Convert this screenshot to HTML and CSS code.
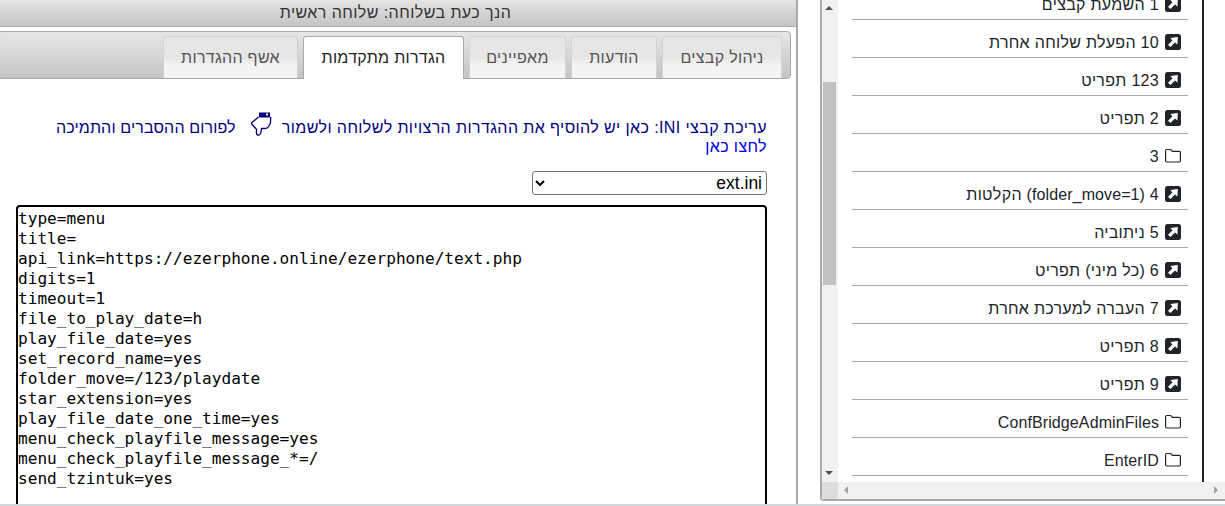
FILE: index.html
```html
<!DOCTYPE html>
<html lang="he" dir="rtl">
<head>
<meta charset="utf-8">
<title>שלוחה ראשית</title>
<link rel="stylesheet" href="styles.css">
</head>
<body>
<svg class="defs" width="0" height="0" aria-hidden="true">
  <symbol id="sc" viewBox="0 0 16 16"><path fill="currentColor" d="M2.500 0A2.500 2.500 0 0 0 0 2.500v11A2.500 2.500 0 0 0 2.500 16h11a2.500 2.500 0 0 0 2.500-2.500v-11A2.500 2.500 0 0 0 13.500 0z"/><path fill="#fff" d="M3 10.800 7.400 6.500 5.400 4.100 12.800 3 12.400 10.500 10 8.400 5.400 13.100z"/></symbol>
  <symbol id="fd" viewBox="0 0 16 16"><path fill="none" stroke="currentColor" stroke-width="1.200" d="M.6 12.800V2.700c0-.7.5-1.200 1.200-1.200h3.400c.5 0 .9.2 1.200.6l.9 1.300h6.900c.7 0 1.200.5 1.200 1.200v8.200c0 .7-.5 1.200-1.200 1.200H1.800c-.7 0-1.200-.5-1.200-1.200z"/></symbol>
</svg>
<div class="page">
  <main class="main">
    <header class="title">הנך כעת בשלוחה: שלוחה ראשית</header>
    <nav class="tabs">
      <a class="tab t1">ניהול קבצים</a>
      <a class="tab t2">הודעות</a>
      <a class="tab t3">מאפיינים</a>
      <a class="tab t4 active">הגדרות מתקדמות</a>
      <a class="tab t5">אשף ההגדרות</a>
    </nav>
    <section class="content">
      <p class="intro">עריכת קבצי INI: כאן יש להוסיף את ההגדרות הרצויות לשלוחה ולשמור<svg class="hand" viewBox="0 0 21 24" width="21" height="24" aria-hidden="true"><path d="M7.500 5 1 10.500c-.6.500-.6 1.200-.1 1.700l3.900 4.300.8.800-.2 3.200c0 1.500 1 2.700 2.200 2.700s2-1 2.200-2.200l.7-4.500h3.700c1.500 0 2.700-.7 3.500-2l1.800-3.700.2-5.800" fill="#fff" stroke="#00007f" stroke-width="1.300" stroke-linejoin="round"/><path d="M8 .5h11v5H8z" fill="#00007f"/><rect x="15" y="1.500" width="2" height="2" fill="#fff"/></svg><span class="forum">לפורום ההסברים והתמיכה</span><br><a class="here">לחצו כאן</a></p>
      <select class="file"><option>ext.ini</option></select>
      <textarea class="editor" dir="ltr" spellcheck="false" readonly>type=menu
title=
api_link=https://ezerphone.online/ezerphone/text.php
digits=1
timeout=1
file_to_play_date=h
play_file_date=yes
set_record_name=yes
folder_move=/123/playdate
star_extension=yes
play_file_date_one_time=yes
menu_check_playfile_message=yes
menu_check_playfile_message_*=/
send_tzintuk=yes</textarea>
    </section>
  </main>
  <aside class="side">
    <div class="box">
      <div class="boxrow">
        <div class="list">
          <ul class="rows">
            <li class="row"><svg class="ic"><use href="#sc"/></svg><span>1 השמעת קבצים</span></li>
            <li class="row"><svg class="ic"><use href="#sc"/></svg><span>10 הפעלת שלוחה אחרת</span></li>
            <li class="row"><svg class="ic"><use href="#sc"/></svg><span>123 תפריט</span></li>
            <li class="row"><svg class="ic"><use href="#sc"/></svg><span>2 תפריט</span></li>
            <li class="row"><svg class="ic"><use href="#fd"/></svg><span>3</span></li>
            <li class="row"><svg class="ic"><use href="#sc"/></svg><span>4 <span class="lat">(folder_move=1)</span> הקלטות</span></li>
            <li class="row"><svg class="ic"><use href="#sc"/></svg><span>5 ניתוביה</span></li>
            <li class="row"><svg class="ic"><use href="#sc"/></svg><span>6 (כל מיני) תפריט</span></li>
            <li class="row"><svg class="ic"><use href="#sc"/></svg><span>7 העברה למערכת אחרת</span></li>
            <li class="row"><svg class="ic"><use href="#sc"/></svg><span>8 תפריט</span></li>
            <li class="row"><svg class="ic"><use href="#sc"/></svg><span>9 תפריט</span></li>
            <li class="row"><svg class="ic"><use href="#fd"/></svg><span class="lat">ConfBridgeAdminFiles</span></li>
            <li class="row"><svg class="ic"><use href="#fd"/></svg><span class="lat">EnterID</span></li>
          </ul>
        </div>
        <div class="vbar"><i class="arrow up"></i><b class="thumb"></b><i class="arrow down"></i></div>
      </div>
      <div class="hbar"><i class="arrow left-a"></i><i class="arrow right-a"></i><span class="corner"></span></div>
    </div>
  </aside>
</div>
</body>
</html>
```
FILE: styles.css
```css
* { box-sizing: border-box; }
html, body { margin: 0; height: 100%; overflow: hidden; background: #fff; }
body { font-family: "Liberation Sans", Arial, sans-serif; font-size: 16px; color: #212529; }
.defs { position: absolute; }
.page {
  display: flex;
  flex-direction: row-reverse;
  height: 506px;
  border-bottom: 2px solid #d3d7d9;
}
.main {
  width: 798px;
  flex: none;
  border-right: 2px solid #aaa;
  overflow: hidden;
  height: 504px;
  display: flex;
  flex-direction: column;
}
.title {
  height: 27px;
  flex: none;
  padding-right: 5px;
  text-align: center;
  line-height: 25px;
  letter-spacing: .44px;
  color: #333;
  background: linear-gradient(#e4e4e4, #c4c4c4);
  border-bottom: 1px solid #aaa;
}
.tabs {
  display: flex;
  gap: 5px;
  margin: 4px 5px 0 -3px;
  height: 48px;
  flex: none;
  padding: 4px 8px 0 0;
  border: 1px solid #aaa;
  border-radius: 4px;
  background: linear-gradient(#e6e6e6, #c4c4c4);
}
.tab {
  height: 42px;
  line-height: 42px;
  letter-spacing: .3px;
  text-align: center;
  color: #555;
  background: linear-gradient(#e6e6e6 0, #e6e6e6 50%, #f3f3f3 68%, #f3f3f3 100%);
  border: 1px solid #d3d3d3;
  border-bottom: 0;
  border-radius: 3px 3px 0 0;
}
.t1 { width: 120px; }
.t2 { width: 86px; }
.t3 { width: 97px; }
.t4 { width: 161px; }
.t5 { width: 135px; }
.tab.active {
  height: 43px;
  background: #fff;
  color: #212121;
  border-color: #aaa;
}
.content { padding: 0 29px 0 0; flex: 1; min-height: 0; }
.intro {
  margin: 33px 0 0;
  width: 750px;
  color: #000080;
  line-height: 19px;
  letter-spacing: .4px;
}
.hand { vertical-align: -3px; margin: 0 10px 0 15px; }
.forum { letter-spacing: .14px; }
.here { color: #0000ee; }
.file {
  display: block;
  width: 235px;
  height: 24px;
  margin: 15px 0 0;
  font: 17.5px "Liberation Sans", Arial, sans-serif;
  background: #fff;
  color: #000;
  border: 1px solid #767676;
  border-radius: 3px;
}
.editor {
  display: block;
  width: 751px;
  height: 340px;
  margin: 10px 0 0;
  padding: 2px 0 0;
  font: 16.1px/20px "DejaVu Sans Mono", "Liberation Mono", monospace;
  color: #000;
  border: 2px solid #000;
  border-radius: 4px;
  resize: none;
  outline: none;
  overflow: hidden;
}
.side {
  flex: none;
  width: 427px;
  height: 501px;
  padding-left: 22px;
  overflow: hidden;
}
.box {
  width: 405px;
  height: 501px;
  border-left: 2px solid #aaa;
  border-bottom: 2px solid #aaa;
  border-bottom-left-radius: 4px;
  display: flex;
  flex-direction: column;
}
.boxrow { display: flex; height: 482px; flex: none; }
.list {
  flex: 1;
  min-width: 0;
  overflow: hidden;
  position: relative;
}
.list::after {
  content: "";
  position: absolute;
  top: 0;
  bottom: 0;
  right: 21px;
  width: 2px;
  background: #222;
}
.rows {
  list-style: none;
  margin: -18px 37px 0 0;
  padding: 0;
  width: 336px;
}
.row {
  height: 38px;
  padding: 8px 7px 0 0;
  display: flex;
  align-items: center;
  gap: 6px;
  border-bottom: 1px solid #aaa;
  white-space: nowrap;
  letter-spacing: .3px;
  color: #212529;
}
.lat { letter-spacing: .1px; }
.ic { width: 16px; height: 16px; flex: none; margin-top: -2px; color: #212529; }
.vbar {
  width: 16px;
  flex: none;
  background: #f1f1f1;
  position: relative;
}
.thumb {
  position: absolute;
  right: 2px;
  left: 1px;
  top: 82px;
  height: 203px;
  background: #c1c1c1;
}
.arrow { position: absolute; width: 0; height: 0; border: 4px solid transparent; }
.up { top: 6px; left: 3px; border-top: 0; border-bottom: 4px solid #505050; }
.down { bottom: 7px; left: 3px; border-bottom: 0; border-top: 4px solid #505050; }
.hbar {
  height: 17px;
  flex: none;
  background: #f1f1f1;
  position: relative;
}
.corner {
  position: absolute;
  left: 0;
  top: 0;
  bottom: 0;
  width: 16px;
  background: #dcdcdc;
  border-bottom-left-radius: 4px;
}
.left-a { left: 22px; top: 4px; border-left: 0; border-right: 4px solid #a3a3a3; }
.right-a { right: 7px; top: 4px; border-right: 0; border-left: 4px solid #a3a3a3; }
```
